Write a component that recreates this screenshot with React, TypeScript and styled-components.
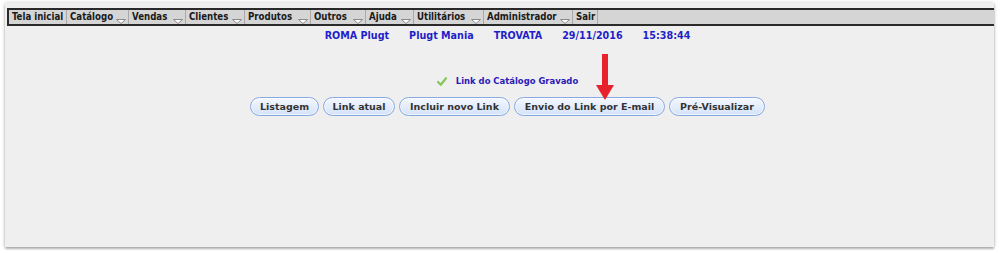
import React from "react";
import styled, { createGlobalStyle } from "styled-components";

const Global = createGlobalStyle`
  html, body { margin: 0; padding: 0; background: #ffffff; }
  body { width: 1000px; height: 253px; overflow: hidden; }
`;

const Panel = styled.div`
  position: relative;
  margin: 3px 0 0 5px;
  width: 989px;
  height: 244px;
  background: #efefef;
  box-shadow: 0 0 4px rgba(0, 0, 0, 0.22), 0 2px 2px rgba(0, 0, 0, 0.25);
  padding: 5px 0 0 2px;
  box-sizing: border-box;
`;

const MenuBar = styled.div`
  display: flex;
  height: 14px;
  background: #d5d5d5;
  border-top: 2px solid #2a2a2a;
  border-bottom: 2px solid #2a2a2a;
  border-left: 2px solid #2a2a2a;
`;

const MenuItem = styled.div<{ $w: number }>`
  width: ${(p) => p.$w}px;
  box-sizing: border-box;
  border-right: 1px solid #a9a9a9;
  display: flex;
  align-items: flex-end;
  justify-content: space-between;
  padding: 0 2px 0 3px;
  font-family: "DejaVu Sans Condensed", "DejaVu Sans", sans-serif;
  font-weight: bold;
  font-size: 9.6px;
  line-height: 14px;
  color: #1a1a1a;
  white-space: nowrap;
`;

const MenuLabel = styled.span`
  align-self: center;
`;

const Caret = styled.svg`
  width: 10px;
  height: 5px;
  flex: none;
`;

const Content = styled.div`
  display: flex;
  flex-direction: column;
  align-items: center;
  padding-left: 14px;
`;

const InfoLine = styled.div`
  display: flex;
  gap: 20px;
  margin-top: 3px;
  font-family: "DejaVu Sans", Verdana, sans-serif;
  font-weight: bold;
  font-size: 9.6px;
  line-height: 14px;
  color: #1f1fc8;
  white-space: nowrap;
`;

const StatusLine = styled.div`
  display: flex;
  align-items: center;
  gap: 9px;
  margin-top: 31px;
  font-family: "DejaVu Sans Condensed", "DejaVu Sans", sans-serif;
  font-weight: bold;
  font-size: 9.4px;
  line-height: 14px;
  color: #2a1ab8;
`;

const ButtonRow = styled.div`
  display: flex;
  gap: 4px;
  margin-top: 9px;
`;

const Button = styled.button<{ $w: number }>`
  width: ${(p) => p.$w}px;
  height: 19px;
  box-sizing: border-box;
  padding: 0;
  border: 1px solid #87a9e2;
  border-radius: 10px;
  background: linear-gradient(#f4f8ff, #d4e2f8);
  box-shadow: inset 0 0 0 1px rgba(255, 255, 255, 0.6);
  font-family: "DejaVu Sans", Verdana, sans-serif;
  font-weight: bold;
  font-size: 9.5px;
  color: #333333;
  white-space: nowrap;
  cursor: pointer;
`;

const Arrow = styled.svg`
  position: absolute;
  left: 591px;
  top: 51px;
  width: 18px;
  height: 46px;
`;

const menu: [string, number, boolean][] = [
  ["Tela inicial", 58, false],
  ["Catálogo", 62, true],
  ["Vendas", 57, true],
  ["Clientes", 59, true],
  ["Produtos", 66, true],
  ["Outros", 55, true],
  ["Ajuda", 48, true],
  ["Utilitários", 70, true],
  ["Administrador", 89, true],
  ["Sair", 25, false],
];

const buttons: [string, number][] = [
  ["Listagem", 69],
  ["Link atual", 72],
  ["Incluir novo Link", 111],
  ["Envio do Link por E-mail", 151],
  ["Pré-Visualizar", 96],
];

export default function App() {
  return (
    <>
      <Global />
      <Panel>
        <MenuBar>
          {menu.map(([label, w, caret]) => (
            <MenuItem key={label} $w={w}>
              <MenuLabel>{label}</MenuLabel>
              {caret && (
                <Caret viewBox="0 0 10 5">
                  <path d="M0.5 0.5 L9.5 0.5 L5 4.5 Z" fill="#ffffff" stroke="#8a8a8a" strokeWidth="1" />
                </Caret>
              )}
            </MenuItem>
          ))}
        </MenuBar>
        <Content>
          <InfoLine>
            <span>ROMA Plugt</span>
            <span>Plugt Mania</span>
            <span>TROVATA</span>
            <span>29/11/2016</span>
            <span>15:38:44</span>
          </InfoLine>
          <StatusLine>
            <svg width="10" height="9" viewBox="0 0 10 9">
              <path d="M1 5 L3.8 7.8 L9 1.2" fill="none" stroke="#86c65a" strokeWidth="2.2" strokeLinecap="round" strokeLinejoin="round" />
            </svg>
            <span>Link do Catálogo Gravado</span>
          </StatusLine>
          <ButtonRow>
            {buttons.map(([label, w]) => (
              <Button key={label} $w={w}>{label}</Button>
            ))}
          </ButtonRow>
        </Content>
        <Arrow viewBox="0 0 18 46">
          <path d="M6 0 H12 V31 H18 L9 46 L0 31 H6 Z" fill="#e8222b" />
        </Arrow>
      </Panel>
    </>
  );
}
